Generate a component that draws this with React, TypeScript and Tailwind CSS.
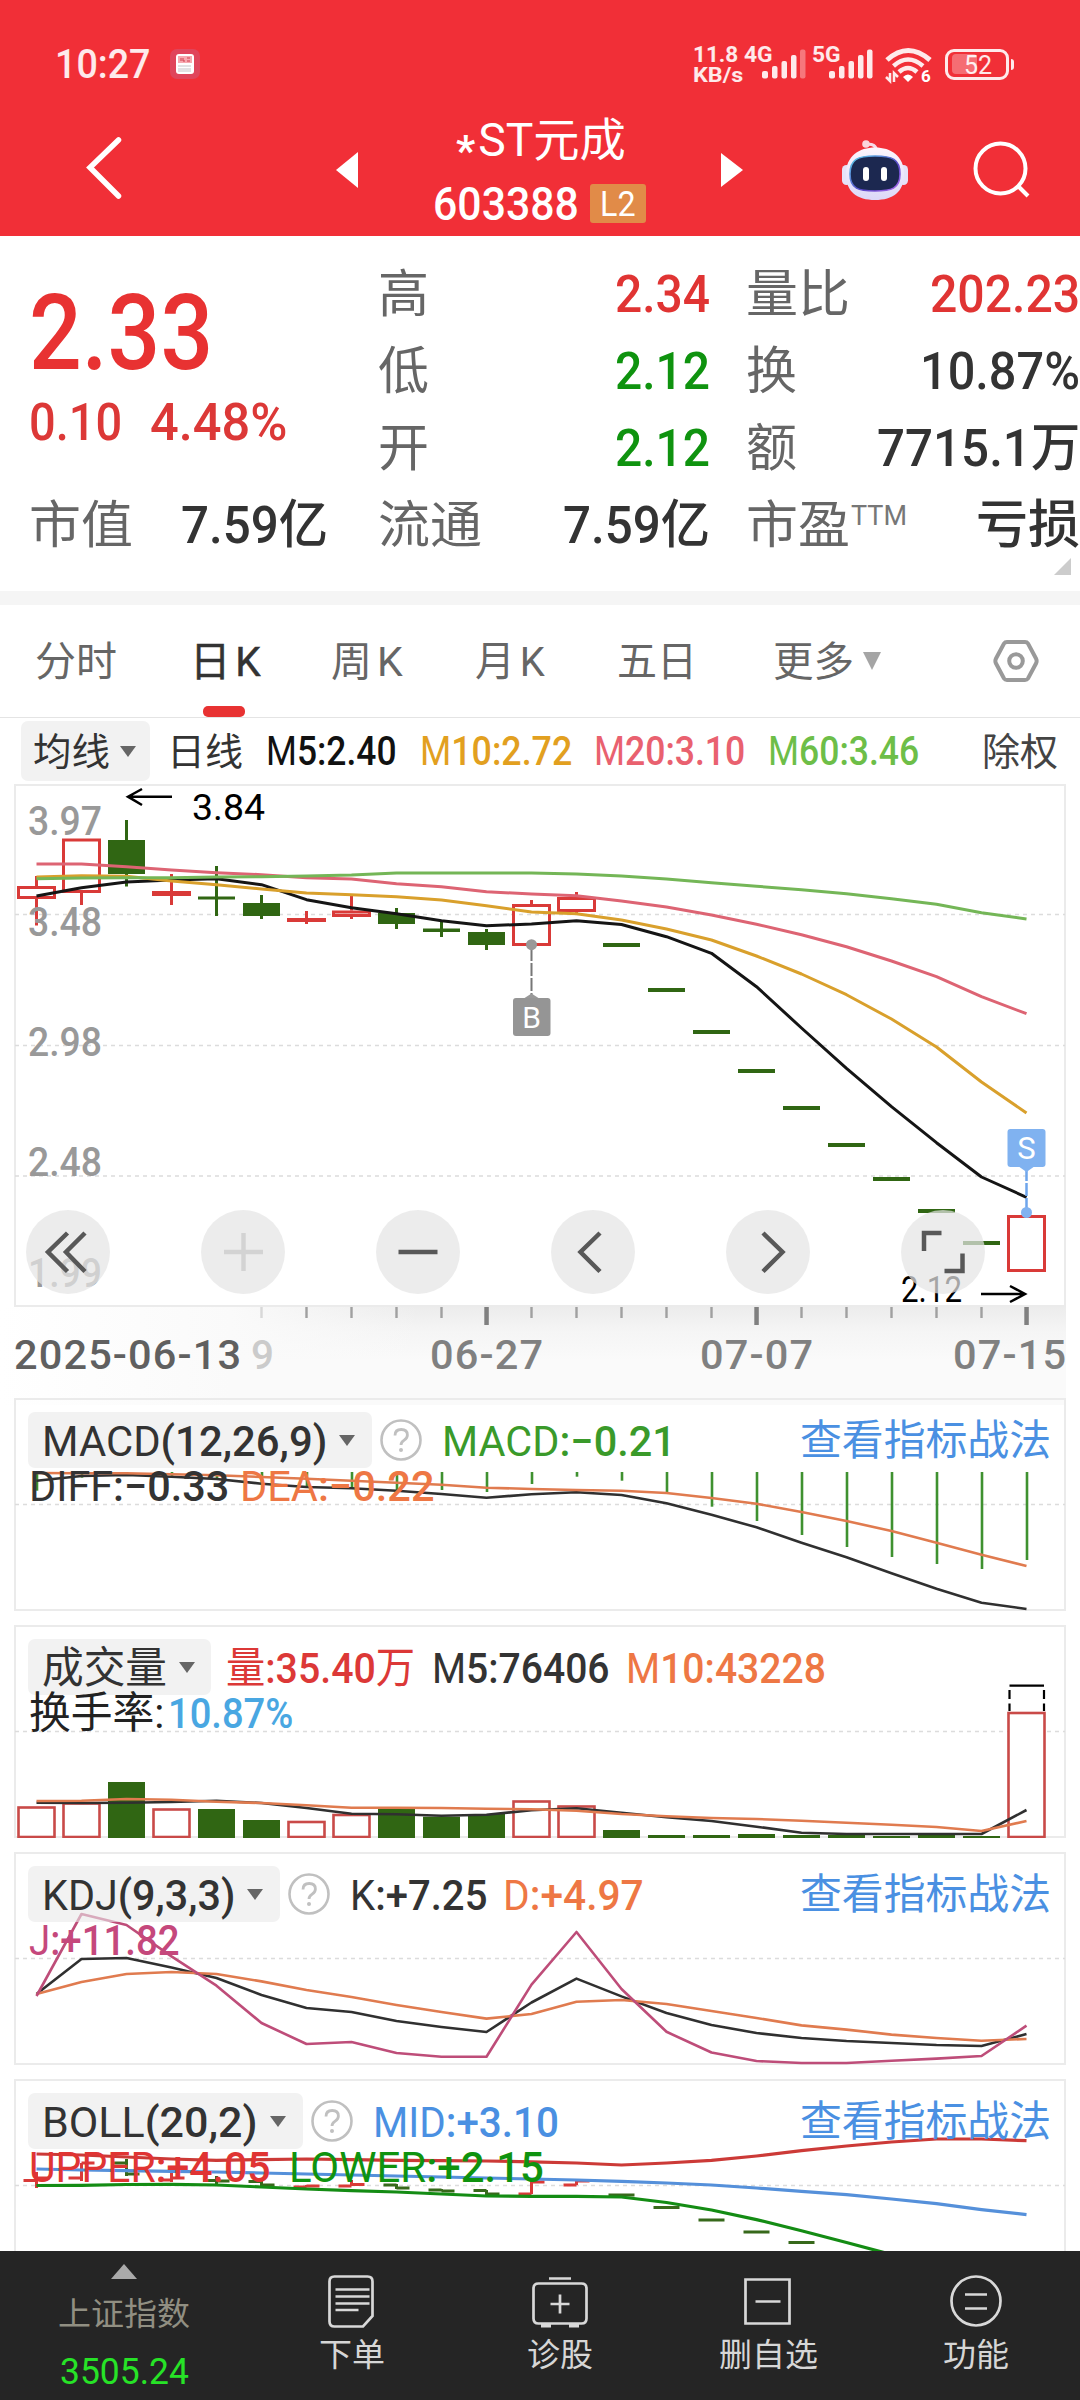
import { useLayoutEffect, useRef, useState, type ReactNode } from 'react';
import { clsx } from 'clsx';

type FitProps = { className?: string; mixed?: boolean; children: ReactNode };

// Squeezes or stretches a single line of text to the width of its box.
// With `mixed`, letters and hanzi are set lighter than the digits beside them.
function Fit({ className, mixed, children }: FitProps) {
  const outer = useRef<HTMLSpanElement>(null);
  const inner = useRef<HTMLSpanElement>(null);
  const [scale, setScale] = useState(1);

  useLayoutEffect(() => {
    if (outer.current && inner.current) {
      setScale(outer.current.clientWidth / inner.current.offsetWidth);
    }
  }, []);

  const content =
    mixed && typeof children === 'string'
      ? children.split(/([A-Za-z\u4e00-\u9fff]+)/).map((part, i) =>
          i % 2 ? <span key={i} className="font-normal">{part}</span> : part,
        )
      : children;

  return (
    <span ref={outer} className={clsx('relative top-px block shrink-0 leading-none', className)}>
      <span
        ref={inner}
        className="inline-block origin-left whitespace-nowrap"
        style={{ transform: `scaleX(${scale})` }}
      >
        {content}
      </span>
    </span>
  );
}

const cx = (i: number) => 36.5 + i * 45;
const points = (ys: number[]) => ys.map((y, i) => `${cx(i)},${y}`).join(' ');

const RED = '#d93a38';
const GREEN = '#306613';

function Line({ ys, color, width = 2.6 }: { ys: number[]; color: string; width?: number }) {
  return <polyline points={points(ys)} fill="none" stroke={color} strokeWidth={width} strokeLinejoin="round" />;
}

function Grid({ y }: { y: number }) {
  return <path d={`M15 ${y}H1065`} stroke="#dcdcdc" strokeWidth="1.3" strokeDasharray="4 4" />;
}

function Caret({ className = 'ml-[14px]' }: { className?: string }) {
  return (
    <svg width="18" height="13" viewBox="0 0 18 13" className={clsx('shrink-0', className)}>
      <path d="M1 1h16L9 12z" fill="#666" />
    </svg>
  );
}

/* ---------- header ---------- */

function SignalBars({ faded = false }: { faded?: boolean }) {
  return (
    <svg width="44" height="30" viewBox="0 0 44 30" fill="#fff" fillOpacity=".9">
      <rect x="0" y="22" width="6" height="7.500" rx="2" />
      <rect x="10" y="17" width="5.500" height="12.500" rx="2" />
      <rect x="19.500" y="12" width="5.500" height="17.500" rx="2" />
      <rect x="29" y="6" width="5.500" height="23.500" rx="2" />
      <rect x="38" y="0.500" width="5.500" height="29" rx="2" fillOpacity={faded ? 0.35 : 0.9} />
    </svg>
  );
}

function StatusBar() {
  return (
    <div className="mt-11 mb-4 flex h-10 items-center text-white/90">
      <Fit className="ml-[55px] w-[95px] text-[40px] font-medium">10:27</Fit>
      <svg width="30" height="30" viewBox="0 0 30 30" className="ml-5">
        <rect width="30" height="30" rx="7" fill="#e0455b" />
        <rect x="6" y="5" width="18" height="20" rx="3" fill="#fff" />
        <rect x="8" y="7" width="14" height="7" fill="#f8a9b0" />
        <path d="M11 9v3M13 9v3h2M17 9h3M17 12h3" stroke="#d04050" strokeWidth="1" fill="none" />
        <path d="M8 17h13M8 20h13M8 22h13" stroke="#c5c5c9" strokeWidth="1" />
      </svg>
      <div className="ml-[493px] flex flex-col font-bold">
        <Fit className="-mt-px w-[45px] text-[22px]">11.8</Fit>
        <Fit className="-mt-px w-[50px] text-[20px]">KB/s</Fit>
      </div>
      <Fit className="mb-5 ml-[1px] w-[29px] text-[22px] font-bold">4G</Fit>
      <div className="-ml-[11px]">
        <SignalBars faded />
      </div>
      <Fit className="mb-5 ml-[6px] w-[29px] text-[22px] font-bold">5G</Fit>
      <div className="-ml-[12px]">
        <SignalBars />
      </div>
      <svg
        width="52"
        height="46"
        viewBox="0 0 52 46"
        className="mt-[10px] -mr-1 ml-3 shrink-0 overflow-visible"
        fill="none"
        stroke="#fff"
        strokeOpacity=".9"
      >
        <path d="M2 14Q23 -5 45 14" strokeWidth="5" />
        <path d="M8.500 20Q23 7 38 20" strokeWidth="4.500" />
        <path d="M14 26Q23 18 32 26" strokeWidth="4.500" />
        <path d="M18 31q5-5 10 0l-5 5z" fill="#fff" stroke="none" />
        <path d="M5 27v8l-4-4M9 36v-9l4 4" strokeWidth="2.500" />
        <text x="36" y="36" fill="#fff" stroke="none" fontSize="17" fontWeight="700" fontFamily="Roboto, sans-serif">6</text>
      </svg>
      <div className="ml-[12px] flex h-[31px] w-[64px] items-center rounded-[9px] border-[3px] border-white/90 px-1">
        <div className="h-[20px] w-[25px] rounded-[4px] bg-white/30" />
        <Fit className="-ml-[13px] w-[28px] text-[25px]">52</Fit>
      </div>
      <div className="ml-[2px] h-[11px] w-[3px] rounded-r bg-white/90" />
    </div>
  );
}

function RobotIcon() {
  return (
    <svg width="68" height="64" viewBox="0 0 68 64" className="mt-[3px] ml-[98px]">
      <defs>
        <linearGradient id="shell" x1="0" y1="0" x2="0" y2="1">
          <stop offset="0" stopColor="#fdf6fd" />
          <stop offset="1" stopColor="#dcd8f8" />
        </linearGradient>
        <linearGradient id="rim" x1="0" y1="0" x2="1" y2="1">
          <stop offset="0" stopColor="#5bd0ea" />
          <stop offset="0.600" stopColor="#5a48c8" />
          <stop offset="1" stopColor="#b06bf0" />
        </linearGradient>
      </defs>
      <path d="M25 6.500Q35 5 35.500 13" fill="none" stroke="#f7dbe8" strokeWidth="3" />
      <circle cx="25" cy="6" r="3.800" fill="#fbd5dc" />
      <rect x="1" y="27" width="9" height="20" rx="4.500" fill="#e6e2f8" />
      <rect x="58" y="27" width="9" height="20" rx="4.500" fill="#e6e2f8" />
      <path d="M34 9.500C50 9.500 63 18 63 36S52 62 34 62S5 54 5 36S18 9.500 34 9.500z" fill="url(#shell)" />
      <path d="M34 18C51 18 59 21 59 36S50 53 34 53S9 51 9 36S17 18 34 18z" fill="#1c2850" stroke="url(#rim)" strokeWidth="1.600" />
      <rect x="22" y="29" width="6" height="14" rx="3" fill="#fff" />
      <rect x="40" y="29" width="6" height="14" rx="3" fill="#fff" />
    </svg>
  );
}

function Header() {
  return (
    <header className="h-[236px] shrink-0 overflow-hidden bg-[#f12f37] text-white">
      <StatusBar />
      <div className="flex h-[136px] items-center">
        <svg width="42" height="64" viewBox="0 0 42 64" className="ml-[82px]">
          <path d="M36.500 4L8 31.500L36.500 60" fill="none" stroke="#fff" strokeWidth="5.500" strokeLinecap="round" />
        </svg>
        <svg width="22" height="36" viewBox="0 0 22 36" className="mt-[3px] ml-[212px]" fill="#fff">
          <path d="M22 0v36L0 18z" />
        </svg>
        <div className="mt-[7px] ml-[75px] flex w-[215px] flex-col self-start">
          <div className="flex h-16 items-center pl-[23px]">
            <Fit className="w-[170px] text-[46px]">
              <span className="relative top-[9px] mr-[3px] text-[42px] font-bold">*</span>ST元成
            </Fit>
          </div>
          <div className="flex h-16 items-center">
            <Fit className="w-[146px] text-[46px] font-medium">603388</Fit>
            <div className="ml-[11px] flex h-[39px] w-14 items-center rounded-[3px] bg-[#e18b48] pl-[10px]">
              <Fit className="w-9 text-[35px]">L2</Fit>
            </div>
          </div>
        </div>
        <svg width="22" height="34" viewBox="0 0 22 34" className="mt-[3px] ml-[73px]" fill="#fff">
          <path d="M0 0v34L22 17z" />
        </svg>
        <RobotIcon />
        <svg width="60" height="64" viewBox="0 0 60 64" className="ml-[63px]" fill="none" stroke="#fff" strokeWidth="4">
          <circle cx="28.500" cy="32.500" r="25" />
          <path d="M46 50l10 10" />
        </svg>
      </div>
    </header>
  );
}

/* ---------- quote ---------- */

type Cell = { label: string; labelW: string; value: string; valueW: string; color: string; sup?: boolean };

const middle: Cell[] = [
  { label: '高', labelW: 'w-[51px]', value: '2.34', valueW: 'w-[95px]', color: 'text-[#e03433]' },
  { label: '低', labelW: 'w-[51px]', value: '2.12', valueW: 'w-[95px]', color: 'text-[#0f930f]' },
  { label: '开', labelW: 'w-[51px]', value: '2.12', valueW: 'w-[95px]', color: 'text-[#0f930f]' },
  { label: '流通', labelW: 'w-[104px]', value: '7.59亿', valueW: 'w-[147px]', color: 'text-[#333]' },
];

const right: Cell[] = [
  { label: '量比', labelW: 'w-[104px]', value: '202.23', valueW: 'w-[150px]', color: 'text-[#e03433]' },
  { label: '换', labelW: 'w-[51px]', value: '10.87%', valueW: 'w-[160px]', color: 'text-[#333]' },
  { label: '额', labelW: 'w-[51px]', value: '7715.1万', valueW: 'w-[203px]', color: 'text-[#333]' },
  { label: '市盈', labelW: 'w-[104px]', value: '亏损', valueW: 'w-[104px]', color: 'text-[#333]', sup: true },
];

function QuoteRow({ cell }: { cell: Cell }) {
  return (
    <div className="flex h-[77px] items-center">
      <Fit className={clsx('text-[51px] text-[#666]', cell.labelW)}>{cell.label}</Fit>
      {cell.sup && <Fit className="mb-[18px] ml-[1px] w-[56px] text-[27px] text-[#777]">TTM</Fit>}
      <Fit className={clsx('ml-auto text-[52px] font-medium', cell.valueW, cell.color)}>{cell.value}</Fit>
    </div>
  );
}

function Quote() {
  return (
    <section className="relative grid h-[355px] shrink-0 grid-cols-[378px_368px_334px] pt-[19px]">
      <div className="flex flex-col pl-[29px]">
        <div className="flex h-[154px] items-center">
          <Fit className="w-[184px] text-[106px] font-medium text-[#e83232]">2.33</Fit>
        </div>
        <div className="mt-px mb-[52px] flex h-6 items-center text-[52px] font-medium text-[#dc3837]">
          <Fit className="w-[93px]">0.10</Fit>
          <Fit className="ml-7 w-[137px]">4.48%</Fit>
        </div>
        <div className="flex h-[77px] items-center">
          <Fit className="w-[104px] text-[51px] text-[#666]">市值</Fit>
          <Fit className="ml-[48px] w-[147px] text-[52px] font-medium text-[#333]">7.59亿</Fit>
        </div>
      </div>
      <div className="pr-[36px]">
        {middle.map((cell) => <QuoteRow key={cell.label} cell={cell} />)}
      </div>
      <div>
        {right.map((cell) => <QuoteRow key={cell.label} cell={cell} />)}
      </div>
      <svg width="17" height="17" viewBox="0 0 17 17" className="absolute right-[9px] bottom-4">
        <path d="M17 0v17H0z" fill="#ccc" />
      </svg>
    </section>
  );
}

/* ---------- tabs ---------- */

function Tabs() {
  return (
    <nav className="flex h-[113px] shrink-0 items-center border-b border-[#e4e4e4] text-[41px] text-[#666]">
      <Fit className="ml-[35px] w-[82px]">分时</Fit>
      <div className="relative ml-[73px] flex h-full items-center text-[#333]">
        <Fit className="w-[71px] [-webkit-text-stroke:0.5px_#333]">
          日<span className="ml-[5px]">K</span>
        </Fit>
        <div className="absolute bottom-0 left-[13px] h-[11px] w-[42px] rounded-[5px] bg-[#e83232]" />
      </div>
      <Fit className="ml-[70px] w-[72px]">
        周<span className="ml-[5px]">K</span>
      </Fit>
      <Fit className="ml-[72px] w-[70px]">
        月<span className="ml-[5px]">K</span>
      </Fit>
      <Fit className="ml-[72px] w-[80px]">五日</Fit>
      <Fit className="ml-[76px] w-[81px]">更多</Fit>
      <svg width="18" height="18" viewBox="0 0 18 18" className="ml-[9px]">
        <path d="M0 0h18L9 18z" fill="#a5a5a5" />
      </svg>
      <svg width="46" height="44" viewBox="0 0 46 44" className="ml-[112px]" fill="none" stroke="#999">
        <path d="M14 3h18q2 0 3 1.500l8 15q1.300 2.500 0 5l-8 15Q34 41 32 41H14q-2 0-3-1.500l-8-15q-1.300-2.500 0-5l8-15Q12 3 14 3z" strokeWidth="4" />
        <circle cx="23" cy="22" r="6.800" strokeWidth="4" />
      </svg>
    </nav>
  );
}

function MaLegend() {
  return (
    <div className="flex h-[66px] shrink-0 items-center text-[40px] font-medium text-[#333]">
      <div className="ml-[21px] flex h-[60px] w-[129px] items-center rounded-[7px] bg-[#f2f2f2]">
        <Fit className="ml-3 w-[77px] text-[38px] font-normal">均线</Fit>
        <Caret className="ml-[9px]" />
      </div>
      <Fit className="ml-[17px] w-[76px] text-[38px] font-normal">日线</Fit>
      <Fit mixed className="ml-[23px] w-[131px] text-[#111]">M5:2.40</Fit>
      <Fit mixed className="ml-[23px] w-[152px] text-[#e2a01f]">M10:2.72</Fit>
      <Fit mixed className="ml-[22px] w-[151px] text-[#e9616f]">M20:3.10</Fit>
      <Fit mixed className="ml-[23px] w-[151px] text-[#6dbe48]">M60:3.46</Fit>
      <Fit className="ml-[63px] w-[76px] text-[38px] font-normal text-[#444]">除权</Fit>
    </div>
  );
}

/* ---------- main chart ---------- */

// body top, body bottom, wick top, wick bottom, rising
type Candle = [number, number, number, number, boolean];

const candles: Candle[] = [
  [886, 899, 876, 925.5, true],
  [838.5, 893, 838.5, 905, true],
  [840, 874, 820, 886.5, false],
  [891, 896, 874, 905, true],
  [896.5, 899.5, 866, 916, false],
  [903, 916, 895, 919, false],
  [918, 922, 911, 924, true],
  [910.5, 917, 896, 919, true],
  [913, 924, 908, 929, false],
  [928.5, 932, 922, 937, false],
  [932, 945, 929, 950, false],
  [904, 946, 900, 946, true],
  [897, 912, 892, 913, true],
  [943, 947, 943, 947, false],
  [988, 992, 988, 992, false],
  [1030, 1034, 1030, 1034, false],
  [1069, 1073, 1069, 1073, false],
  [1106, 1110, 1106, 1110, false],
  [1143, 1147, 1143, 1147, false],
  [1177, 1181, 1177, 1181, false],
  [1209, 1213, 1209, 1213, false],
  [1241, 1245, 1241, 1245, false],
  [1215, 1272, 1215, 1272, true],
];

const ma5 = [896, 887.7, 882, 880, 878.7, 884.7, 899.7, 907.7, 913.7, 920.7, 925.7, 924, 920.7, 924.5, 936.7, 953.3, 986.7, 1028, 1068.3, 1106.7, 1142.7, 1177, 1197.3];
const ma10 = [877, 875.7, 876.3, 881, 884.7, 889, 893, 894.7, 896.7, 900, 905.7, 912, 913.7, 920, 929, 940, 956, 974, 994.7, 1019, 1047, 1082, 1113];
const ma20 = [864, 864, 866.7, 870, 872.7, 874.7, 877.7, 879, 883.7, 886.7, 891.7, 894, 895.7, 901, 907, 915, 924.3, 934.7, 946.7, 961, 976.7, 996.7, 1013.7];
const ma60 = [878.7, 878, 877.7, 877.7, 877, 876.7, 876, 875, 873, 873, 873, 873, 874, 876, 879, 882.7, 886.3, 889.7, 893.7, 898.7, 904.3, 912.7, 919];

const priceLabels: [string, number][] = [['3.97', 835], ['3.48', 935.5], ['2.98', 1055.5], ['2.48', 1175.5], ['1.99', 1286.5]];

function CandleShape({ candle, x }: { candle: Candle; x: number }) {
  const [top, bottom, high, low, up] = candle;
  if (!up) {
    return (
      <g fill={GREEN}>
        <rect x={x - 18.5} y={top} width="37" height={bottom - top} />
        <rect x={x - 1.5} y={high} width="3" height={low - high} />
      </g>
    );
  }
  return (
    <g stroke={RED} strokeWidth="3" fill="none">
      <path d={`M${x} ${high}V${top}M${x} ${bottom}V${low}`} />
      <rect x={x - 18} y={top + 1.5} width="36" height={Math.max(bottom - top - 3, 1)} />
    </g>
  );
}

const controls = [
  'M67.500 1233L48 1252L67.500 1271.500M85 1233L66 1252L85 1271.500',
  'M224 1252H263M243.500 1233V1271',
  'M398.500 1252H437.500',
  'M600 1233L580.500 1252L600 1271.500',
  'M763 1233L782.500 1252L763 1271.500',
  'M941.500 1233H924V1251M944.500 1271H962.500V1253.500',
];

function PriceChart() {
  return (
    <section className="relative mx-[14px] h-[523px] shrink-0 border-2 border-[#ebebeb]">
      <svg
        width="1080"
        height="523"
        viewBox="0 784 1080 523"
        className="absolute -top-[2px] -left-4 z-10 max-w-none overflow-visible"
        fontFamily="Roboto, sans-serif"
      >
        <Grid y={914.5} />
        <Grid y={1045.5} />
        <Grid y={1176} />
        {candles.map((candle, i) => <CandleShape key={i} candle={candle} x={cx(i)} />)}
        <g fontSize="41" fontWeight="500" fill="#999">
          {priceLabels.map(([label, y]) => (
            <text key={label} x="28" y={y} textLength="74" lengthAdjust="spacingAndGlyphs">{label}</text>
          ))}
        </g>
        <Line ys={ma20} color="#dd6473" width={3} />
        <Line ys={ma5} color="#151515" width={3} />
        <Line ys={ma10} color="#d9a02c" width={3} />
        <Line ys={ma60} color="#74b657" width={3} />
        <g fontSize="37" fill="#000">
          <text x="192" y="820" textLength="73" lengthAdjust="spacingAndGlyphs">3.84</text>
          <text x="901" y="1302" textLength="61" lengthAdjust="spacingAndGlyphs">2.12</text>
        </g>
        <path d="M172 796.700H128M142 789L128 796.700L142 805M981 1294H1025M1010 1286L1025 1294L1010 1302" fill="none" stroke="#000" strokeWidth="2.500" />

        <g>
          <path d="M531.500 948V996" stroke="#777" strokeWidth="2" strokeDasharray="13 2" />
          <circle cx="531.500" cy="944.700" r="5.500" fill="#999" />
          <path d="M523 999L531.500 993.500L540 999z" fill="#999" />
          <rect x="513" y="998" width="37.500" height="38" rx="3" fill="#959595" />
          <text x="531.500" y="1028" fontSize="30" fill="#fff" textAnchor="middle">B</text>
        </g>
        <g>
          <path d="M1026.500 1168V1212" stroke="#6ea5ec" strokeWidth="2.500" strokeDasharray="13 2" />
          <circle cx="1026.500" cy="1212.500" r="5.500" fill="#80b2f0" />
          <path d="M1018 1166L1026.500 1172L1035 1166z" fill="#80b2f0" />
          <rect x="1007.500" y="1129" width="38" height="38" rx="3" fill="#80b2f0" />
          <text x="1026.500" y="1159" fontSize="31" fill="#fff" textAnchor="middle">S</text>
        </g>

        {controls.map((d, i) => (
          <g key={d}>
            <circle cx={68 + i * 175} cy="1252" r="42" fill="#e4e4e4" fillOpacity=".72" />
            <path d={d} fill="none" stroke={i === 1 ? '#d3d3d3' : '#585858'} strokeWidth="4.500" />
          </g>
        ))}
      </svg>
    </section>
  );
}

const dates: [string, number, number][] = [['06-27', 430, 113], ['07-07', 700, 113], ['07-15', 953, 113]];

function DateAxis() {
  return (
    <div className="relative h-[91px] shrink-0">
      <svg
        width="1080"
        height="98"
        viewBox="0 1307 1080 98"
        className="absolute top-0 left-0"
        fontFamily="Roboto, sans-serif"
        fontSize="41.500"
        fontWeight="500"
      >
        <defs>
          <linearGradient id="shade" x1="0" y1="0" x2="0" y2="1">
            <stop offset="0" stopColor="#ececec" />
            <stop offset="0.250" stopColor="#f5f5f5" />
            <stop offset="0.550" stopColor="#fafafa" />
          </linearGradient>
          <linearGradient id="fade" x1="0" y1="0" x2="1" y2="0">
            <stop offset="0" stopColor="#fff" />
            <stop offset="0.550" stopColor="#fafafa" />
            <stop offset="1" stopColor="#fafafa" stopOpacity="0" />
          </linearGradient>
        </defs>
        <rect x="15" y="1307" width="1051" height="98" fill="url(#shade)" />
        <rect x="0" y="1307" width="420" height="98" fill="url(#fade)" />
        {Array.from({ length: 18 }, (_, n) => n + 5).map((i) => {
          const major = i === 10 || i === 16 || i === 22;
          return (
            <rect
              key={i}
              x={cx(i) - (major ? 2.2 : 1.2)}
              y="1307"
              width={major ? 4.5 : 2.4}
              height={major ? 18 : 11}
              fill={i === 5 ? '#d8d8d8' : major ? '#808080' : '#a0a0a0'}
            />
          );
        })}
        <text x="14" y="1369" fill="#606060" textLength="227" lengthAdjust="spacing">2025-06-13</text>
        <text x="251" y="1369" fill="#cbcbcb" textLength="23" lengthAdjust="spacingAndGlyphs">9</text>
        {dates.map(([label, x, w]) => (
          <text key={label} x={x} y="1369" fill="#808080" textLength={w} lengthAdjust="spacing">{label}</text>
        ))}
      </svg>
    </div>
  );
}

/* ---------- indicator panels ---------- */

type PanelProps = {
  top: number;
  name: string;
  pillW: string;
  nameW: string;
  help?: boolean;
  link?: boolean;
  values: ReactNode;
  below: ReactNode;
  children: ReactNode;
};

function Panel({ top, name, pillW, nameW, help, link, values, below, children }: PanelProps) {
  return (
    <section className="relative mx-[14px] mb-[14px] h-[213px] shrink-0 border-2 border-[#ebebeb] pt-3 text-[43px]">
      <svg width="1080" height="213" viewBox={`0 ${top} 1080 213`} className="absolute -top-[2px] -left-4 max-w-none">
        {children}
      </svg>
      <div className="relative flex h-14 items-center pl-3">
        <div className={clsx('flex h-14 items-center rounded-[7px] bg-[#eaeaea]/60 pl-[14px]', pillW)}>
          <Fit mixed className={clsx('font-medium text-[#333]', nameW)}>{name}</Fit>
          <Caret className="ml-[11px]" />
        </div>
        {help && (
          <svg width="42" height="42" viewBox="0 0 42 42" className="ml-2 shrink-0">
            <circle cx="21" cy="21" r="19.500" fill="none" stroke="#c0c0c0" strokeWidth="2.600" />
            <path d="M15 16.500q0-6 6.200-6t6.200 5.500q0 3-3.200 5.200t-3.200 4.800" fill="none" stroke="#c0c0c0" strokeWidth="2.800" />
            <circle cx="21" cy="31" r="2" fill="#c0c0c0" />
          </svg>
        )}
        <div className="flex items-center font-medium">{values}</div>
        {link && <Fit className="mr-[13px] ml-auto w-[251px] text-[42px] text-[#4a90e2]">查看指标战法</Fit>}
      </div>
      <div className="relative flex h-[35px] items-center pl-[13px] font-medium">{below}</div>
    </section>
  );
}

const macdEnds = [1490.7, 1477.7, 1475, 1476, 1480, 1485, 1486.7, 1489, 1490, 1490, 1492, 1484, 1476.7, 1480.7, 1492, 1506.7, 1521, 1535, 1547, 1557, 1564, 1569, 1560];
const diff = [1480.7, 1476, 1475, 1476.7, 1479, 1483.7, 1487, 1488.3, 1490.7, 1494, 1497.7, 1494.3, 1492.3, 1495, 1503.3, 1514.7, 1527.3, 1542.7, 1557.3, 1573.3, 1588.7, 1602.7, 1609];
const dea = [1473, 1473.3, 1473.3, 1474.3, 1475.3, 1477, 1478.7, 1480.7, 1482.7, 1484.7, 1487.7, 1489, 1490, 1490.7, 1493, 1498, 1503.7, 1512, 1521, 1531, 1542.7, 1554.7, 1566];

const volTops = [1807.5, 1803.5, 1782, 1809.5, 1809, 1820, 1822, 1815, 1809, 1816.7, 1814, 1801.5, 1806.5, 1830, 1835, 1835, 1834, 1835, 1835, 1836, 1835, 1836, 1713];
const vol5 = [1802.7, 1803, 1802.7, 1802, 1800.7, 1803, 1808, 1813.7, 1814.3, 1815.7, 1814.7, 1810.3, 1808.3, 1812.7, 1817.3, 1821, 1826.7, 1832.7, 1834, 1834, 1834, 1834, 1810];
const vol10 = [1801, 1800.7, 1799, 1799.7, 1801.7, 1803, 1805.3, 1807.7, 1807.7, 1808, 1808.7, 1809.3, 1810.7, 1814, 1816.3, 1818, 1819, 1820.7, 1822.7, 1824.7, 1827, 1831, 1821];

const kdjK = [1994, 1959, 1958, 1967.5, 1978, 1995, 2008, 2012, 2021, 2027, 2032, 2002.5, 1978.6, 1996.4, 2013, 2025, 2033, 2038, 2041, 2043, 2045, 2046, 2034];
const kdjD = [1994, 1982, 1974, 1972, 1974, 1981.4, 1990, 1997, 2005, 2012, 2018.6, 2014, 2001.8, 2000, 2004, 2011, 2018, 2025.4, 2029.6, 2034.6, 2038, 2040.7, 2039];
const kdjJ = [1996, 1914, 1925, 1956.4, 1985.7, 2023, 2044, 2042, 2053, 2056.8, 2056.8, 1984.6, 1932, 1989, 2031.8, 2052.5, 2061, 2063, 2063, 2060.7, 2058.6, 2056, 2025.7];

const upper = [2154, 2155, 2157, 2159, 2160.4, 2159.6, 2159, 2159.6, 2160.4, 2160.7, 2161, 2161.8, 2163, 2165, 2163, 2160.4, 2156, 2150.7, 2146, 2142, 2139, 2139, 2140.7];
const mid = [2169, 2170, 2170.6, 2171.3, 2172, 2173, 2174, 2175, 2176, 2177, 2178, 2179, 2180, 2181.4, 2183, 2185, 2188, 2191.4, 2194.6, 2199, 2203.6, 2209.6, 2214.6];
const lower = [2185.5, 2185.3, 2184.5, 2184.3, 2185, 2187, 2189, 2190.7, 2192, 2194, 2196, 2196.4, 2196.4, 2197, 2202.5, 2210, 2219.6, 2230.7, 2242.5, 2254.5, 2266, 2277, 2288];

// open, high, low, close, rising
const bars: [number, number, number, number, boolean][] = [
  [2180.5, 2172, 2188, 2178, true],
  [2178, 2163, 2181, 2163, true],
  [2163, 2159, 2176, 2174, false],
  [2180, 2173, 2182, 2178, true],
  [2180.5, 2176, 2184, 2181, false],
  [2181.5, 2181, 2186, 2185, false],
  [2187, 2185, 2187, 2186, true],
  [2186, 2180, 2186, 2184.5, true],
  [2185, 2184, 2189, 2188, false],
  [2190, 2189, 2191, 2191, false],
  [2190.5, 2190, 2195, 2194, false],
  [2194, 2182, 2194, 2182, true],
  [2185, 2181, 2185, 2181, true],
  [2195, 2195, 2195, 2195, false],
  [2207.5, 2207.5, 2207.5, 2207.5, false],
  [2220, 2220, 2220, 2220, false],
  [2232, 2232, 2232, 2232, false],
  [2242.5, 2242.5, 2242.5, 2242.5, false],
];

function Macd() {
  return (
    <Panel
      top={1398}
      name="MACD(12,26,9)"
      pillW="w-[344px]"
      nameW="w-[285px]"
      help
      link
      values={<Fit mixed className="ml-[20px] w-[234px] text-[#3a9a2a]">MACD:−0.21</Fit>}
      below={
        <>
          <Fit mixed className="w-[200px] text-[#333]">DIFF:−0.33</Fit>
          <Fit mixed className="ml-[11px] w-[195px] text-[#ee7744]">DEA:−0.22</Fit>
        </>
      }
    >
      <Grid y={1504.5} />
      {macdEnds.map((end, i) => <path key={i} d={`M${cx(i) + 0.5} 1472V${end}`} stroke="#3f9130" strokeWidth="2.600" />)}
      <Line ys={diff} color="#303030" />
      <Line ys={dea} color="#e07b4f" />
    </Panel>
  );
}

function Volume() {
  return (
    <Panel
      top={1625}
      name="成交量"
      pillW="w-[183px]"
      nameW="w-[125px]"
      values={
        <>
          <Fit mixed className="ml-[15px] w-[189px] text-[#dc3837]">量:35.40万</Fit>
          <Fit mixed className="ml-[17px] w-[178px] text-[#333]">M5:76406</Fit>
          <Fit mixed className="ml-4 w-[200px] text-[#ee7744]">M10:43228</Fit>
        </>
      }
      below={
        <>
          <Fit className="w-[135px] font-normal text-[#222]">换手率:</Fit>
          <Fit className="ml-[4px] w-[125px] text-[#49a7e2]">10.87%</Fit>
        </>
      }
    >
      <Grid y={1731.5} />
      {volTops.map((top, i) =>
        candles[i][4] ? (
          <rect key={i} x={cx(i) - 18} y={top} width="36" height={1837 - top} fill="#fff" stroke="#c94a48" strokeWidth="2.600" />
        ) : (
          <rect key={i} x={cx(i) - 18.5} y={top} width="37" height={1838 - top} fill={GREEN} />
        ),
      )}
      <path d="M1009.500 1685.700H1044M1009.500 1690V1699M1044 1690V1699M1009.500 1703.500V1711M1044 1703.500V1711" stroke="#000" strokeWidth="2.200" />
      <Line ys={vol5} color="#303030" />
      <Line ys={vol10} color="#e07b4f" />
    </Panel>
  );
}

function Kdj() {
  return (
    <Panel
      top={1852}
      name="KDJ(9,3,3)"
      pillW="w-[252px]"
      nameW="w-[193px]"
      help
      link
      values={
        <>
          <Fit mixed className="ml-[20px] w-[137px] text-[#333]">K:+7.25</Fit>
          <Fit mixed className="ml-4 w-[141px] text-[#ee7744]">D:+4.97</Fit>
        </>
      }
      below={<Fit mixed className="w-[151px] text-[#c5487c]">J:+11.82</Fit>}
    >
      <Grid y={1958.5} />
      <Line ys={kdjK} color="#303030" />
      <Line ys={kdjD} color="#e07b4f" />
      <Line ys={kdjJ} color="#be4d79" />
    </Panel>
  );
}

function Boll() {
  return (
    <Panel
      top={2079}
      name="BOLL(20,2)"
      pillW="w-[275px]"
      nameW="w-[216px]"
      help
      link
      values={<Fit mixed className="ml-[20px] w-[186px] text-[#4a90e2]">MID:+3.10</Fit>}
      below={
        <>
          <Fit mixed className="w-[242px] text-[#e03433]">UPPER:+4.05</Fit>
          <Fit mixed className="ml-[18px] w-[255px] text-[#0f930f]">LOWER:+2.15</Fit>
        </>
      }
    >
      <Grid y={2185.5} />
      {bars.map(([open, high, low, close, up], i) => (
        <path
          key={i}
          d={`M${cx(i) - 13} ${open}H${cx(i)}M${cx(i)} ${high}V${low}M${cx(i)} ${close}H${cx(i) + 13}`}
          stroke={up ? RED : '#37691b'}
          strokeWidth="3"
        />
      ))}
      <Line ys={upper} color="#cc3a37" width={3.2} />
      <Line ys={mid} color="#5590da" width={3.2} />
      <Line ys={lower} color="#148c14" width={3.2} />
    </Panel>
  );
}

/* ---------- bottom bar ---------- */

const actions = [
  {
    label: '下单',
    width: 'w-[66px]',
    icon: (
      <>
        <path d="M10.500 3.500h33q5 0 5 5V43L39 53.500H10.500q-5 0-5-5v-40q0-5 5-5z" />
        <path d="M11.500 16.500h34M11.500 23.500h34M11.500 30.500h34M11.500 37h23" strokeWidth="2.300" />
      </>
    ),
  },
  {
    label: '诊股',
    width: 'w-[66px]',
    icon: (
      <>
        <path d="M6.500 10.500h43q5 0 5 5v30q0 5-5 5h-43q-5 0-5-5v-30q0-5 5-5zM17 5.500h22M28 21.500v19M18.500 31h19" />
        <path d="M9 52.500h10M37 52.500h10" strokeWidth="4" />
      </>
    ),
  },
  { label: '删自选', width: 'w-[99px]', icon: <path d="M5.500 6.500h44v44h-44zM15.500 28.500h25" /> },
  {
    label: '功能',
    width: 'w-[66px]',
    icon: (
      <>
        <circle cx="28" cy="28" r="24.500" />
        <path d="M17 21.500h22M17 35.500h22" />
      </>
    ),
  },
];

function BottomBar() {
  return (
    <footer className="flex h-[149px] shrink-0 bg-[#252525]">
      <div className="flex w-[248px] flex-col items-center pt-[13px]">
        <svg width="26" height="15" viewBox="0 0 26 15">
          <path d="M13 0L26 15H0z" fill="#aaa" />
        </svg>
        <Fit className="mt-[18px] w-[132px] text-[32px] text-[#918f82]">上证指数</Fit>
        <Fit className="mt-[24px] w-[129px] text-[36px] text-[#27e327]">3505.24</Fit>
      </div>
      {actions.map(({ label, width, icon }) => (
        <div key={label} className="flex w-[208px] flex-col items-center pt-[22px]">
          <svg width="56" height="56" viewBox="0 0 56 56" fill="none" stroke="#d8d8d8" strokeWidth="2.700">
            {icon}
          </svg>
          <Fit className={clsx('mt-[9px] text-[32px] text-[#d6d6d6]', width)}>{label}</Fit>
        </div>
      ))}
    </footer>
  );
}

export default function App() {
  return (
    <div className="flex h-[2400px] w-[1080px] flex-col overflow-hidden bg-white font-['Roboto','Noto_Sans_CJK_SC',sans-serif]">
      <Header />
      <main className="flex min-h-0 flex-1 flex-col overflow-hidden">
        <Quote />
        <div className="h-[14px] shrink-0 bg-[#f5f5f5]" />
        <Tabs />
        <MaLegend />
        <PriceChart />
        <DateAxis />
        <Macd />
        <Volume />
        <Kdj />
        <Boll />
      </main>
      <BottomBar />
    </div>
  );
}
